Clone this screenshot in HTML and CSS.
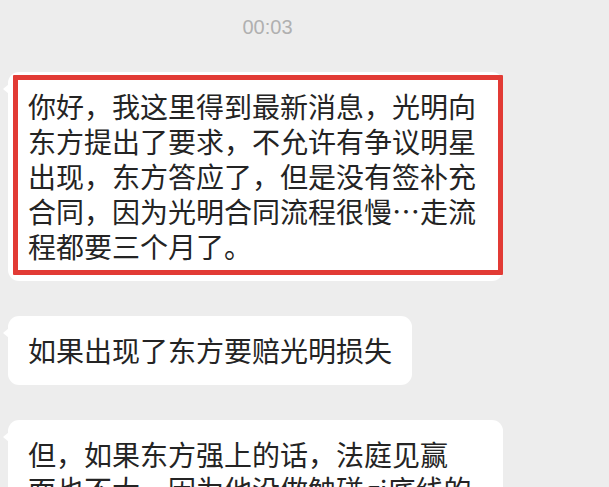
FILE: index.html
```html
<!DOCTYPE html>
<html lang="zh-CN">
<head>
<meta charset="utf-8">
<link rel="stylesheet" href="styles.css">
</head>
<body>
<div class="chat">
  <div class="time">00:03</div>
  <div class="msg">
    <div class="bubble wide marked">你好，我这里得到最新消息，光明向<br>东方提出了要求，不允许有争议明星<br>出现，东方答应了，但是没有签补充<br>合同，因为光明合同流程很慢…走流<br>程都要三个月了。</div>
  </div>
  <div class="msg">
    <div class="bubble">如果出现了东方要赔光明损失</div>
  </div>
  <div class="msg">
    <div class="bubble wide">但，如果东方强上的话，法庭见赢<br>面也不大，因为他没做触碰gi底线的</div>
  </div>
</div>
</body>
</html>
```

FILE: styles.css
```css
html, body {
  margin: 0;
  padding: 0;
  background: #ededed;
  overflow: hidden;
}
.chat {
  display: flex;
  flex-direction: column;
  align-items: flex-start;
  padding-top: 17px;
  gap: 35px;
}
.time {
  width: 535px;
  text-align: center;
  font-family: "Liberation Sans", Arial, sans-serif;
  font-size: 20px;
  line-height: 20px;
  color: #b0b0b0;
}
.msg {
  display: flex;
  padding-left: 8px;
}
.bubble {
  position: relative;
  background: #ffffff;
  border-radius: 11px;
  padding: 17px 20px;
  font-family: "Noto Sans CJK SC", "Noto Sans", sans-serif;
  font-size: 28px;
  line-height: 35px;
  color: #242424;
  white-space: nowrap;
}
.bubble::before {
  content: "";
  position: absolute;
  left: -5px;
  top: 12px;
  border-top: 5px solid transparent;
  border-bottom: 5px solid transparent;
  border-right: 6px solid #ffffff;
}
.wide {
  width: 455px;
}
.marked::after {
  content: "";
  position: absolute;
  left: 5px;
  right: 0;
  top: 3px;
  bottom: 6px;
  border: 5px solid #e23b35;
  border-radius: 1px;
}
```
